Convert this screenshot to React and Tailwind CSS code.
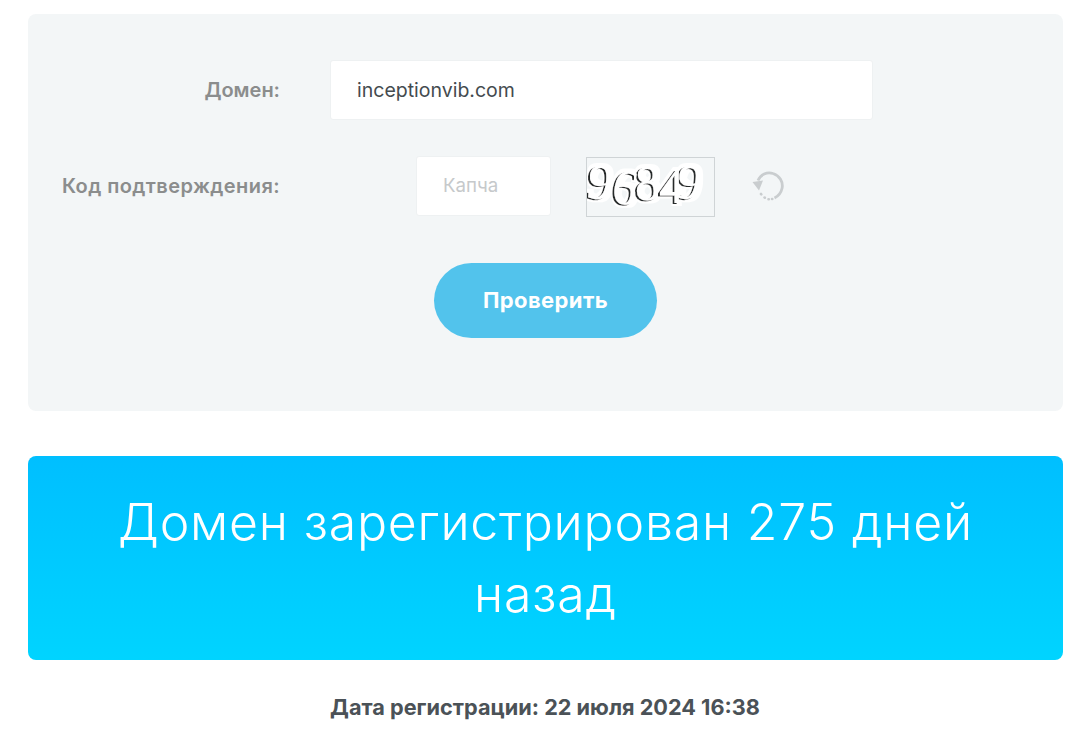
import React from "react";

const font = { fontFamily: '"Inter", "Noto Sans", sans-serif' };

const digits = [
  { ch: "9", x: 0, y: 41, r: 8 },
  { ch: "6", x: 26, y: 46, r: 10 },
  { ch: "8", x: 48, y: 42, r: 0 },
  { ch: "4", x: 72, y: 45, r: 0 },
  { ch: "9", x: 89, y: 41, r: 10 },
];

function Captcha() {
  return (
    <div className="w-[129px] h-[60px] mt-[2px] mr-[37px] border border-[#cfd4d6] bg-[#f3f6f7]">
      <svg width="127" height="58" viewBox="0 0 127 58">
        <defs>
          {/* white glyph on a dark offset copy, with a white halo round both */}
          <filter id="emboss" x="-30%" y="-30%" width="160%" height="160%">
            <feMorphology in="SourceAlpha" operator="dilate" radius="2.500" result="fat" />
            <feFlood floodColor="#ffffff" />
            <feComposite in2="fat" operator="in" result="halo" />
            <feOffset in="SourceAlpha" dx="-1.800" dy="1.200" result="moved" />
            <feFlood floodColor="#26292b" />
            <feComposite in2="moved" operator="in" result="shade" />
            <feMerge>
              <feMergeNode in="halo" />
              <feMergeNode in="shade" />
              <feMergeNode in="SourceGraphic" />
            </feMerge>
          </filter>
        </defs>
        <g fontFamily='"Liberation Serif", serif' fontSize="50" fill="#fff" filter="url(#emboss)">
          {digits.map((d, i) => (
            <text key={i} x={d.x} y={d.y} transform={`rotate(${d.r} ${d.x + 12} 28)`}>{d.ch}</text>
          ))}
        </g>
      </svg>
    </div>
  );
}

function RefreshIcon() {
  return (
    <svg width="34" height="34" viewBox="0 0 34 34" fill="none">
      <path d="M6 11.500C8.500 5.500 15 2.500 21 4.500C27.500 6.500 31.500 13 30 19.500C29 24 25.500 27.500 22.500 29" stroke="#c9cdcf" strokeWidth="2.800" />
      <path d="M0.500 13L11 11.500L7 21.500Z" fill="#c9cdcf" />
      <path d="M9 25L9.300 25.300M12.500 28.500L12.800 28.700M16.500 30.200L16.800 30.200M20 30L20.300 30" stroke="#c9cdcf" strokeWidth="2.600" strokeLinecap="round" />
    </svg>
  );
}

export default function App() {
  return (
    <div className="bg-white h-[729px] overflow-hidden pt-[14px] px-[27px]" style={font}>
      <form className="h-[397px] ml-px bg-[#f3f6f7] rounded-lg pt-[46px]">
        <div className="flex items-center h-[60px]">
          <label className="w-[252px] text-right text-[20px] font-semibold text-[#8b8d8d]">Домен:</label>
          <div className="ml-[50px] w-[543px] h-[60px] bg-white border border-[#eef1f2] rounded-[3px] pl-[26px] pt-px flex items-center text-[19.500px] text-[#444b4f]">
            inceptionvib.com
          </div>
        </div>
        <div className="flex items-center h-[60px] mt-[36px]">
          <label className="w-[252px] text-right text-[20px] font-semibold tracking-[0.42px] text-[#8b8d8d]">Код подтверждения:</label>
          <div className="ml-[136px] mr-[35px] w-[135px] h-[60px] bg-white border border-[#eef1f2] rounded-[3px] pl-[26px] flex items-center text-[18.700px] text-[#c6c9cb]">
            Капча
          </div>
          <Captcha />
          <RefreshIcon />
        </div>
        <div className="flex justify-center mt-[47px]">
          <button type="button" className="w-[223px] h-[75px] rounded-full bg-[#52c3ec] text-white text-[22px] font-bold tracking-[0.4px]">
            Проверить
          </button>
        </div>
      </form>
      <div className="mt-[45px] ml-px h-[204px] rounded-lg bg-gradient-to-b from-[#00bfff] to-[#00d4ff] flex items-center justify-center px-[80px]">
        <h2 className="text-center text-white text-[50px] font-[350] leading-[72px] tracking-[0.8px]">
          Домен зарегистрирован 275 дней назад
        </h2>
      </div>
      <p className="mt-[31px] text-center text-[21.700px] font-bold text-[#4b5257]">Дата регистрации: 22 июля 2024 16:38</p>
    </div>
  );
}
